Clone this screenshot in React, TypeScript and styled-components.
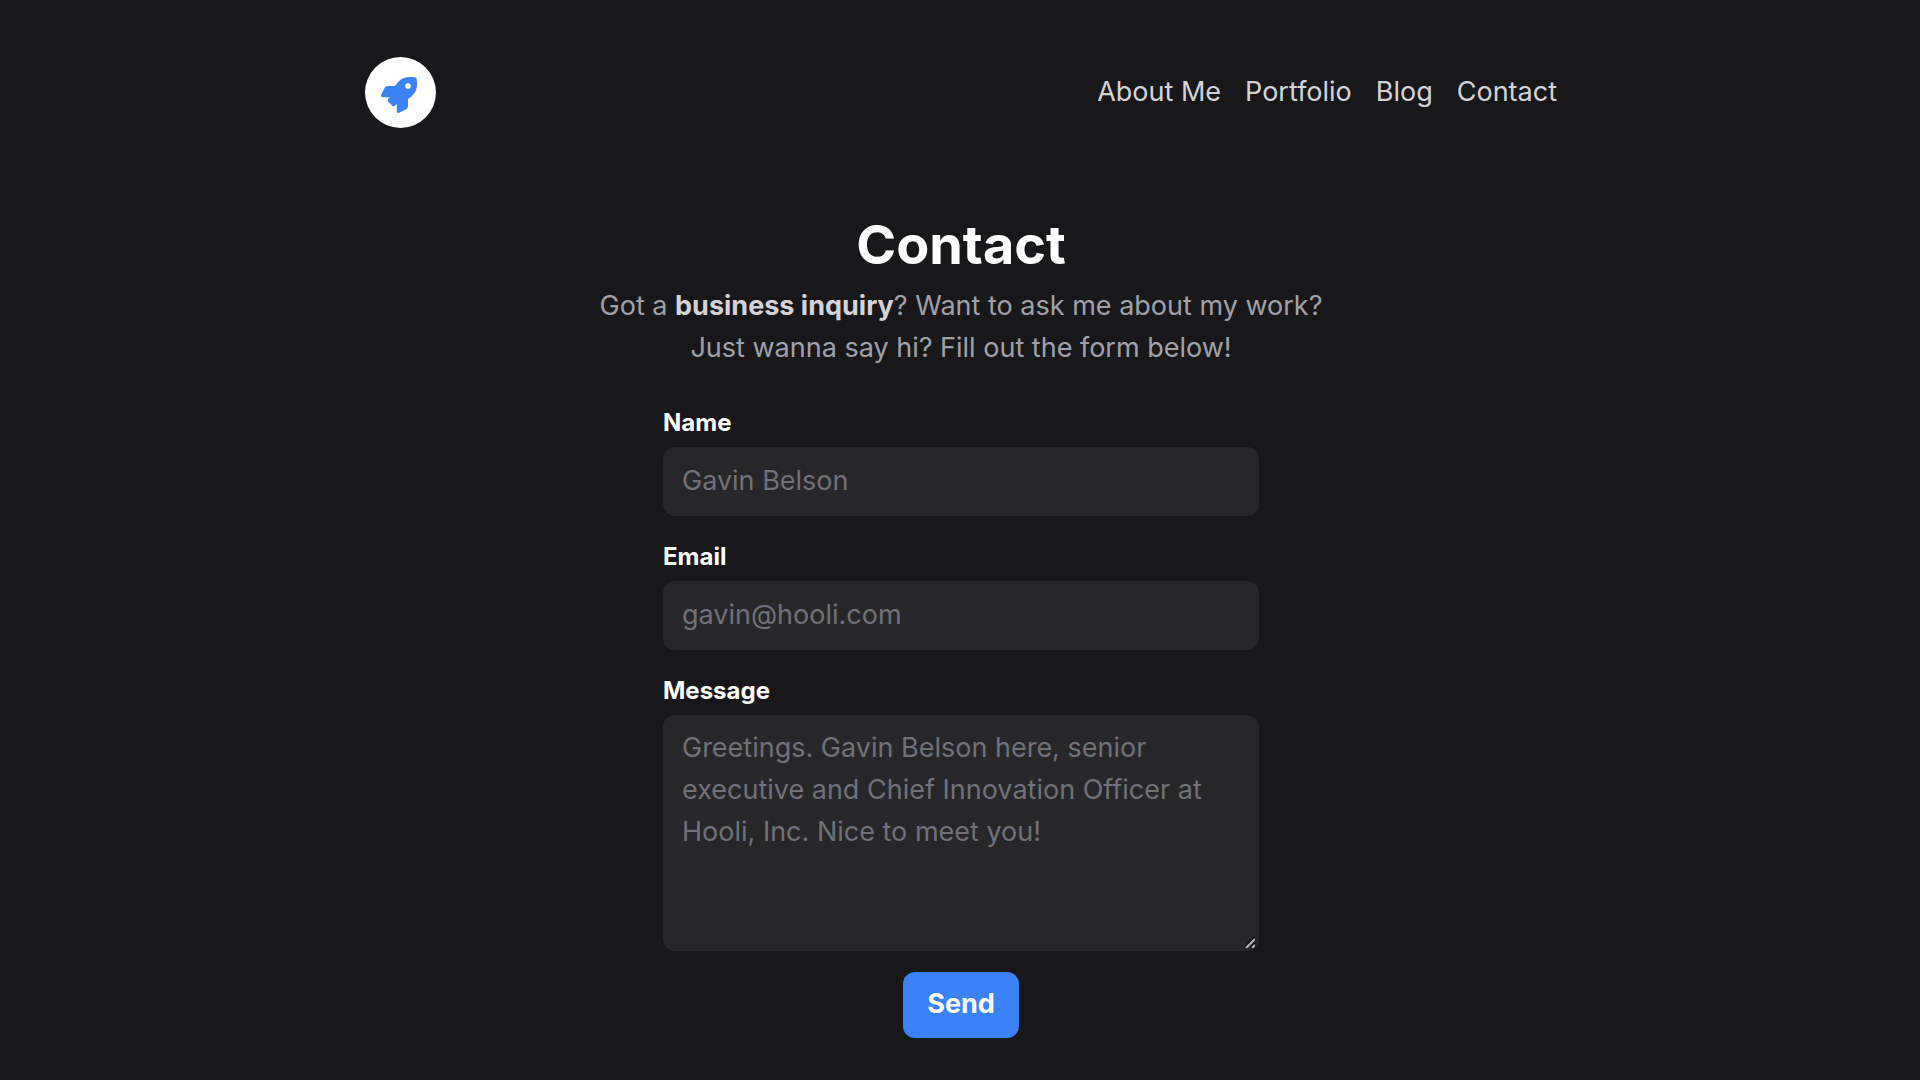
import React from "react";
import styled, { createGlobalStyle } from "styled-components";
import { FaRocket } from "react-icons/fa";

const GlobalStyle = createGlobalStyle`
  *, *::before, *::after { box-sizing: border-box; }
  body {
    margin: 0;
    background: #18181b;
    color: #a1a1aa;
    font-family: Inter, "Liberation Sans", sans-serif;
    font-size: 27px;
    font-weight: 400;
    line-height: 42px;
  }
`;

const Page = styled.div`
  max-width: 1194px;
  margin: 0 auto;
  padding: 57px 0 42px 2px;
`;

const Header = styled.header`
  display: flex;
  align-items: center;
  justify-content: space-between;
`;

const Logo = styled.a`
  display: flex;
  align-items: center;
  justify-content: center;
  width: 71px;
  height: 71px;
  padding: 5px 4px 0 0;
  border-radius: 50%;
  background: #fff;
  color: #3b82f6;
  font-size: 36px;
`;

const Nav = styled.nav`
  display: flex;
  gap: 24px;
  padding-bottom: 2px;
`;

const NavLink = styled.a`
  color: #d4d4d8;
  text-decoration: none;
`;

const Main = styled.main`
  display: flex;
  flex-direction: column;
  align-items: center;
  padding-top: 84px;
`;

const Title = styled.h1`
  margin: 0;
  color: #fff;
  font-size: 54px;
  font-weight: 700;
  line-height: 66px;
`;

const Intro = styled.p`
  max-width: 744px;
  margin: 7px 0 0;
  text-align: center;
`;

const Strong = styled.strong`
  color: #d4d4d8;
  font-weight: 700;
`;

const Form = styled.form`
  display: flex;
  flex-direction: column;
  align-items: center;
  gap: 21px;
  width: 100%;
  max-width: 596px;
  margin-top: 34px;
`;

const Field = styled.div`
  display: flex;
  flex-direction: column;
  gap: 5px;
  width: 100%;
`;

const Label = styled.label`
  color: #fff;
  font-size: 24px;
  font-weight: 700;
  line-height: 39px;
`;

const Input = styled.input`
  width: 100%;
  height: 69px;
  padding: 12px 19px 15px;
  border: 0;
  border-radius: 12px;
  background: #27272a;
  color: #fff;
  font: inherit;
  &::placeholder { color: #71717a; opacity: 1; }
`;

const TextAreaBox = styled.div`
  position: relative;
`;

const TextArea = styled(Input)`
  display: block;
  height: 236px;
  resize: vertical;
  &::-webkit-resizer { background: transparent; }
`;

const Grip = styled.svg`
  position: absolute;
  right: 4px;
  bottom: 3px;
  width: 12px;
  height: 12px;
  pointer-events: none;
`;

const SendButton = styled.button`
  padding: 11px 24px 13px;
  border: 0;
  border-radius: 12px;
  background: #3b82f6;
  color: #fff;
  font: inherit;
  font-weight: 700;
  cursor: pointer;
`;

const links = [
  { label: "About Me", href: "#about" },
  { label: "Portfolio", href: "#portfolio" },
  { label: "Blog", href: "#blog" },
  { label: "Contact", href: "#contact" },
];

export default function App() {
  return (
    <>
      <GlobalStyle />
      <Page>
        <Header>
          <Logo href="#home" aria-label="Home">
            <FaRocket />
          </Logo>
          <Nav>
            {links.map((link) => (
              <NavLink key={link.href} href={link.href}>
                {link.label}
              </NavLink>
            ))}
          </Nav>
        </Header>
        <Main>
          <Title>Contact</Title>
          <Intro>
            Got a <Strong>business inquiry</Strong>? Want to ask me about my work? Just wanna say hi?
            Fill out the form below!
          </Intro>
          <Form onSubmit={(event) => event.preventDefault()}>
            <Field>
              <Label htmlFor="name">Name</Label>
              <Input id="name" type="text" placeholder="Gavin Belson" />
            </Field>
            <Field>
              <Label htmlFor="email">Email</Label>
              <Input id="email" type="email" placeholder="gavin@hooli.com" />
            </Field>
            <Field>
              <Label htmlFor="message">Message</Label>
              <TextAreaBox>
                <TextArea
                  as="textarea"
                  id="message"
                  placeholder="Greetings. Gavin Belson here, senior executive and Chief Innovation Officer at Hooli, Inc. Nice to meet you!"
                />
                <Grip viewBox="0 0 12 12" aria-hidden="true">
                  <path d="M2 11 12 1M8 11 12 7" stroke="#111113" strokeWidth="2" />
                  <path d="M3 12 12 3M9 12 12 9" stroke="#b9b9ba" strokeWidth="2" />
                </Grip>
              </TextAreaBox>
            </Field>
            <SendButton type="submit">Send</SendButton>
          </Form>
        </Main>
      </Page>
    </>
  );
}
